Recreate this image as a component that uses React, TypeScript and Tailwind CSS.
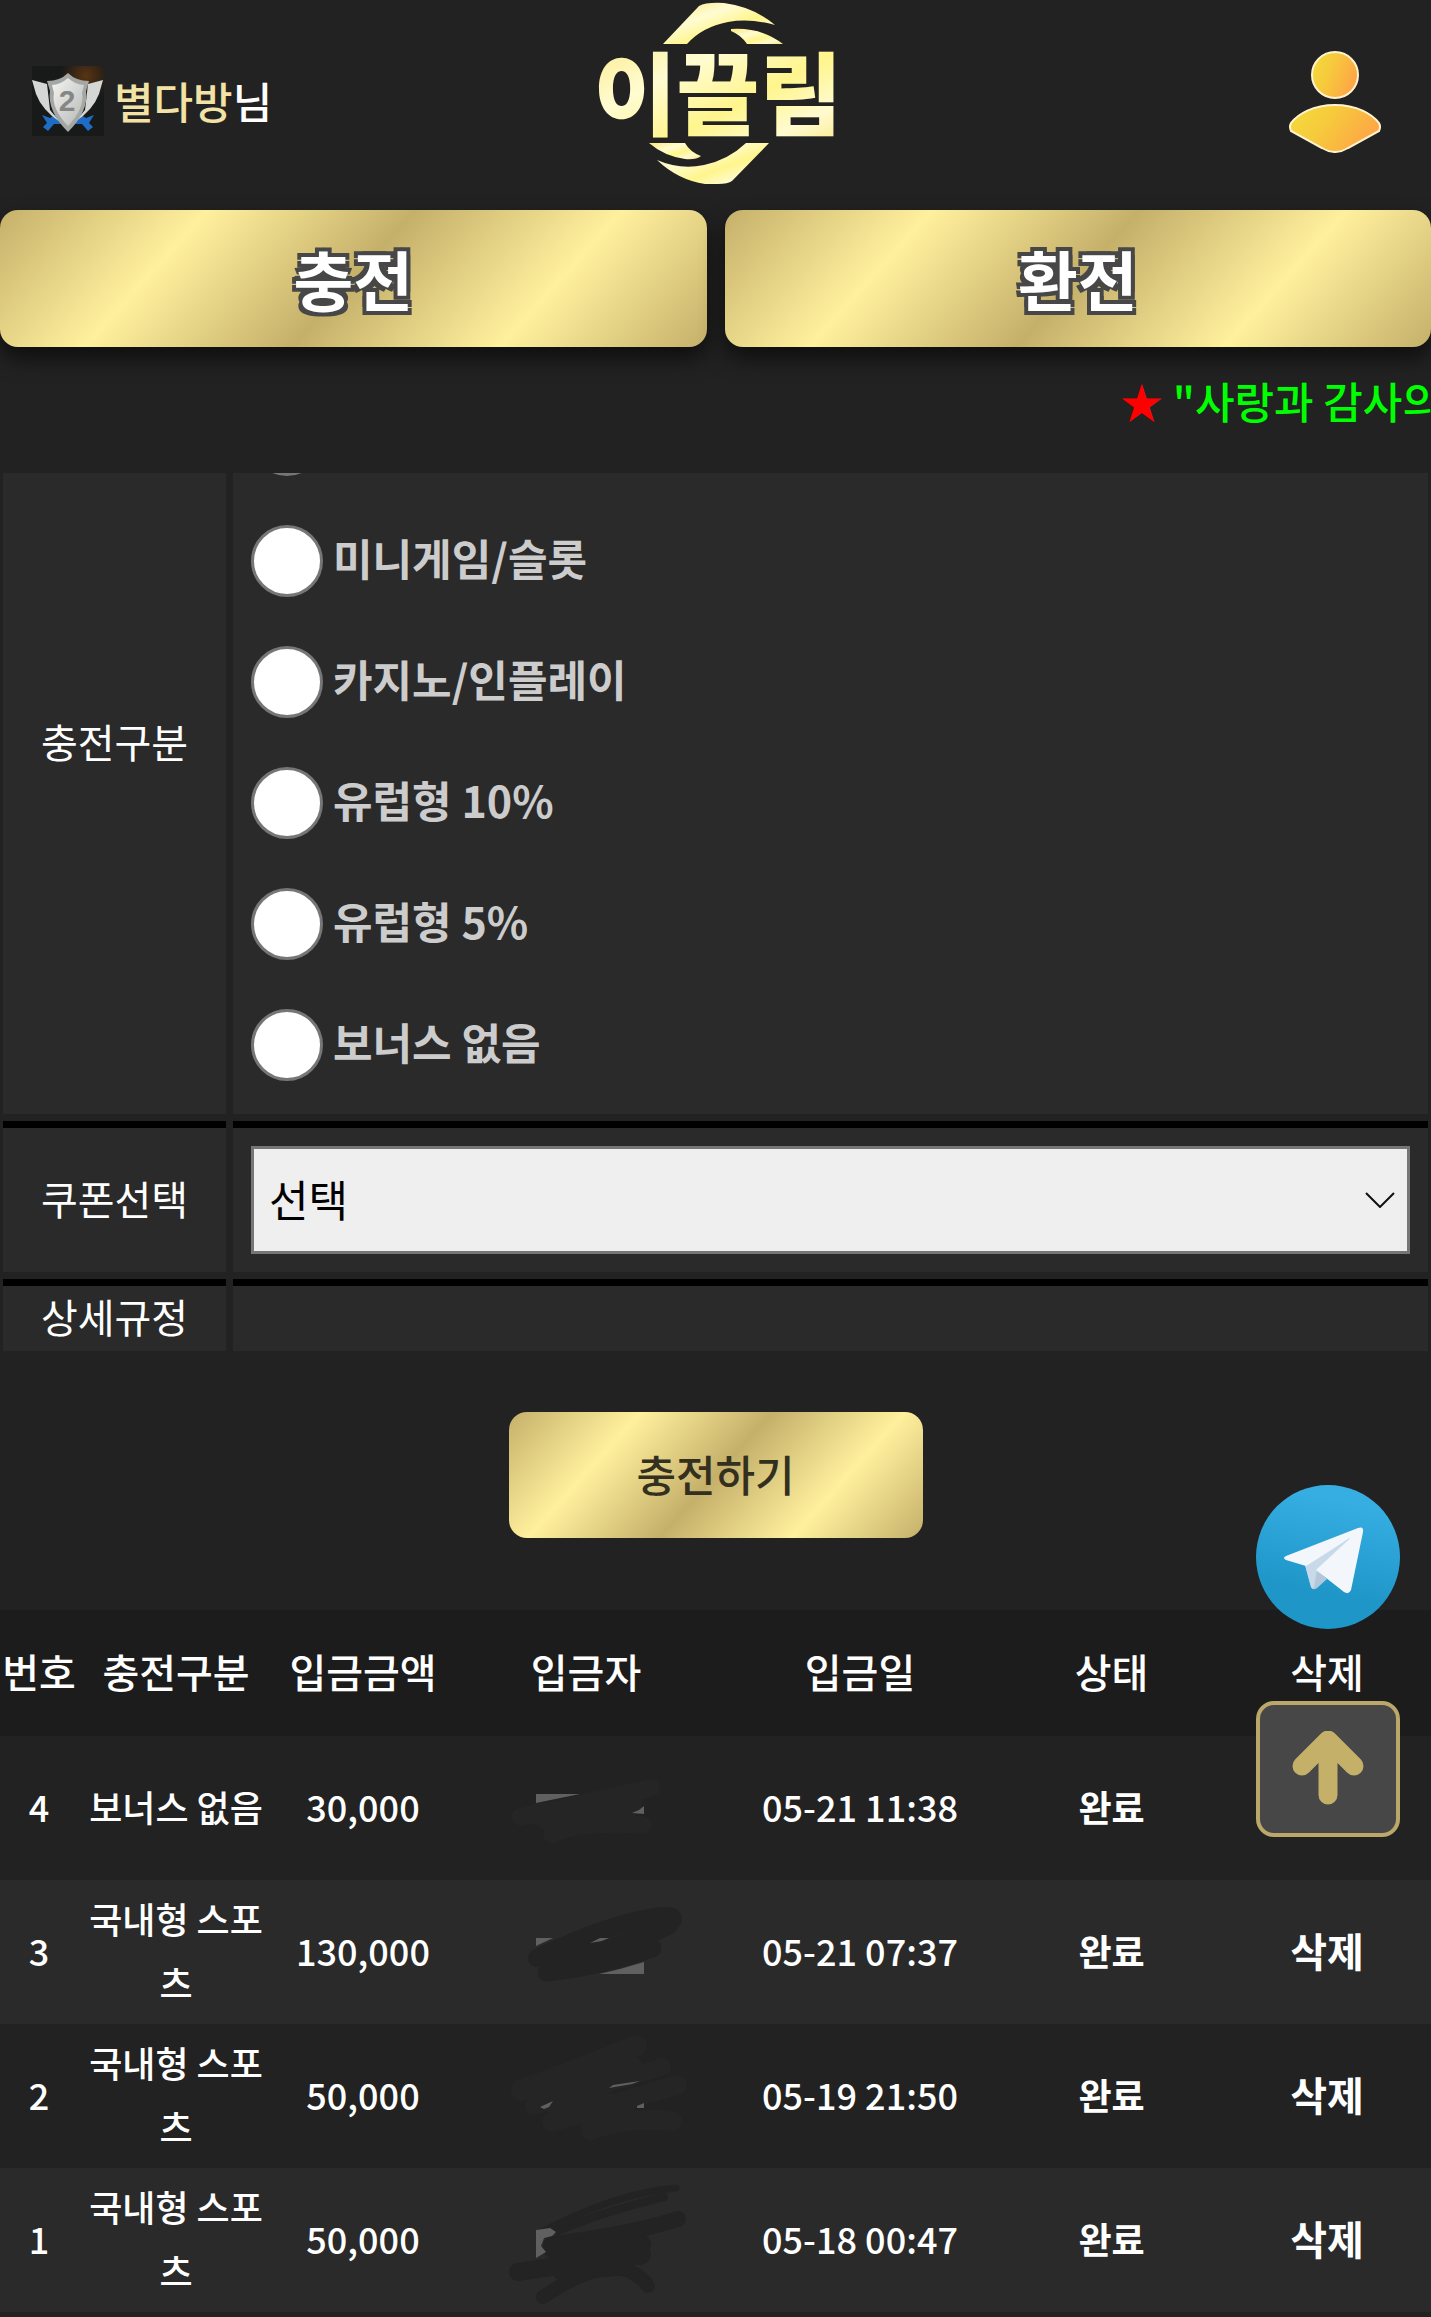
import React, { useState } from 'react'

interface Deposit {
  no: number
  type: string
  amount: string
  date: string
  status: string
}

const deposits: Deposit[] = [
  { no: 4, type: '보너스 없음', amount: '30,000', date: '05-21 11:38', status: '완료' },
  { no: 3, type: '국내형 스포츠', amount: '130,000', date: '05-21 07:37', status: '완료' },
  { no: 2, type: '국내형 스포츠', amount: '50,000', date: '05-19 21:50', status: '완료' },
  { no: 1, type: '국내형 스포츠', amount: '50,000', date: '05-18 00:47', status: '완료' },
]

const bonusTypes = ['미니게임/슬롯', '카지노/인플레이', '유럽형 10%', '유럽형 5%', '보너스 없음']

// brush strokes and what is left of the name box under them, per row
const masks: Record<number, { color: string; strokes: { d: string; w: number }[]; bits: string[] }> = {
  4: {
    color: '#252525',
    strokes: [
      { d: 'M29 81 L159 52', w: 18 },
      { d: 'M45 78 L140 68', w: 22 },
      { d: 'M60 98 Q90 84 151 89', w: 18 },
      { d: 'M52 86 L136 80', w: 14 },
    ],
    bits: ['44,58 88,58 44,67', '140,77 147,74 152,70 152,78'],
  },
  3: {
    color: '#232323',
    strokes: [
      { d: 'M45 78 Q120 42 170 36 Q188 34 176 46 Q150 60 60 84', w: 18 },
      { d: 'M55 92 Q110 86 160 68', w: 19 },
      { d: 'M60 80 L150 64', w: 20 },
    ],
    bits: ['44,58 61,58 44,66', '98,63 108,58 117,58 110,61', '107,94 128,89 152,82 152,94'],
  },
  2: {
    color: '#252525',
    strokes: [
      { d: 'M30 66 Q90 45 144 22', w: 22 },
      { d: 'M42 82 L170 43', w: 18 },
      { d: 'M50 60 L140 44', w: 24 },
      { d: 'M60 98 L185 61', w: 20 },
      { d: 'M98 106 Q140 92 180 97', w: 20 },
      { d: 'M60 76 L130 84', w: 26 },
    ],
    bits: ['48,83 61,77 57,83 52,85', '117,64 121,61 148,57 140,60', '145,82 152,79 152,84 145,84'],
  },
  1: {
    color: '#232323',
    strokes: [
      { d: 'M48 65 Q120 26 184 20', w: 7 },
      { d: 'M66 63 Q110 44 172 29', w: 8 },
      { d: 'M60 76 Q140 66 186 51', w: 16 },
      { d: 'M26 104 Q90 96 150 76', w: 18 },
      { d: 'M62 80 L148 86', w: 22 },
      { d: 'M51 129 Q100 96 130 101 Q146 104 156 118', w: 14 },
      { d: 'M70 104 L134 98', w: 18 },
    ],
    bits: ['44,62 58,60 64,64 60,68 52,70 49,78 54,84 44,90'],
  },
}

const RankBadge = () => (
  <svg className="size-[72px] shrink-0" viewBox="0 0 72 72" aria-hidden="true">
    <defs>
      <radialGradient id="glow" cx="0.75" cy="0.14" r="0.35">
        <stop offset="0" stopColor="#5a3412" />
        <stop offset="1" stopColor="#171a18" />
      </radialGradient>
      <linearGradient id="silver" x1="0" y1="0" x2="1" y2="1">
        <stop offset="0" stopColor="#f4f5f4" />
        <stop offset="1" stopColor="#b5b8b5" />
      </linearGradient>
    </defs>
    <rect width="72" height="70" fill="url(#glow)" />
    <path d="M10 49 L18 52 L26 47 L29 58 L22 58 L16 65 L11 61 L15 57 Z" fill="#1f6cc4" />
    <path d="M62 49 L54 52 L46 47 L43 58 L50 58 L56 65 L61 61 L57 57 Z" fill="#1f6cc4" />
    <path d="M0 14 L15 18 L18 44 L28 56 Q10 44 4 28 Z" fill="#d5d7d6" />
    <path d="M71 14 L56 18 L53 44 L43 56 Q61 44 67 28 Z" fill="#d5d7d6" />
    <path d="M36 7 Q44 15 57 15 L54 25 Q57 45 36 66 Q15 45 18 25 L15 15 Q28 15 36 7 Z" fill="#a4a7a4" />
    <path d="M36 12 Q44 19 52 19 L50 27 Q53 42 36 60 Q19 42 22 27 L20 19 Q28 19 36 12 Z" fill="url(#silver)" />
    <text x="35" y="45" textAnchor="middle" fontSize="30" fontWeight="700" fill="#858785" fontFamily="Liberation Sans, sans-serif">
      2
    </text>
  </svg>
)

const Logo = () => (
  <svg className="h-[184px] w-[248px]" viewBox="32 0 248 184" role="img" aria-label="이끌림">
    <defs>
      <linearGradient id="logoGold" x1="0" y1="0" x2="1" y2="1">
        <stop offset="0" stopColor="#fbe77c" />
        <stop offset="0.35" stopColor="#fffcd2" />
        <stop offset="0.6" stopColor="#fff58c" />
        <stop offset="0.8" stopColor="#fffbd0" />
        <stop offset="1" stopColor="#f9e378" />
      </linearGradient>
    </defs>
    <g fill="url(#logoGold)">
      <path d="M103 44 L139 6 Q146 2 164 3 Q194 7 215 25 Q190 18 168 22 Q142 27 127 44 Z" />
      <path d="M171 29 Q201 27 223 44 L187 44 Q181 35 171 31 Z" />
      <path d="M89 143 L125 143 Q130 152 141 156 Q136 160 125 159 Q104 156 89 143 Z" />
      <path d="M97 160 Q120 170 144 165 Q168 160 186 143 L209 143 L172 181 Q168 184 158 184 L145 184 Q118 180 97 160 Z" />
      <text x="158" y="128" textAnchor="middle" fontSize="90" fontWeight="900" fontFamily="Noto Sans CJK KR, sans-serif">
        이끌림
      </text>
    </g>
  </svg>
)

const ProfileIcon = () => (
  <svg className="h-[102px] w-[92px]" viewBox="0 0 92 102" aria-hidden="true">
    <defs>
      <linearGradient id="person" x1="0" y1="0" x2="1" y2="0.4">
        <stop offset="0" stopColor="#f4dc3c" />
        <stop offset="0.45" stopColor="#f6cb3c" />
        <stop offset="1" stopColor="#fda845" />
      </linearGradient>
    </defs>
    <g fill="url(#person)" stroke="#fff3d0" strokeWidth="2">
      <circle cx="46" cy="24" r="23" />
      <path d="M46 54 C68 54 83 63 90 72 Q92 76 90 80 L59 97 Q46 105 33 97 L2 80 Q0 76 2 72 C9 63 24 54 46 54 Z" />
    </g>
  </svg>
)

const TelegramIcon = () => (
  <svg className="size-36" viewBox="0 0 144 144" aria-hidden="true">
    <defs>
      <linearGradient id="telegram" x1="0.6" y1="0" x2="0.4" y2="1">
        <stop offset="0.1" stopColor="#37aee2" />
        <stop offset="0.75" stopColor="#1e96c8" />
      </linearGradient>
    </defs>
    <circle cx="72" cy="72" r="72" fill="url(#telegram)" />
    <path d="M49 80 L55 102 Q57 106 61 103 L71 94 L60 84 Z" fill="#b3c7db" />
    <path d="M49 80 L55 102 Q57 105 58 102 L61 85 L94 53 Z" fill="#c8daea" />
    <path d="M30 71 L102 43 Q108 41 107 47 L95 105 Q93 110 88 107 L60 85 L94 53 L50 81 L30 75 Q26 73 30 71 Z" fill="#f3f7fc" />
  </svg>
)

const NameMask = ({ no }: { no: number }) => {
  const mask = masks[no]
  return (
    <svg className="mx-auto block h-36 w-[188px] overflow-visible" viewBox="0 0 188 144" aria-hidden="true">
      {mask.strokes.map(s => (
        <path key={s.d} d={s.d} fill="none" stroke={mask.color} strokeWidth={s.w} strokeLinecap="round" />
      ))}
      {mask.bits.map(points => (
        <polygon key={points} points={points} fill="#606060" />
      ))}
    </svg>
  )
}

const gold =
  'bg-[linear-gradient(132deg,#c5b06a_0%,#fff09d_25%,#c5b06a_50%,#fff09d_75%,#c5b06a_100%)]'

const bigButton =
  'h-[137px] rounded-[18px] text-[65px] leading-none font-bold text-white cursor-pointer shadow-[0_11px_22px_rgba(0,0,0,0.6)] [text-shadow:-4px_-4px_#474747,4px_-4px_#474747,-4px_4px_#474747,4px_4px_#474747]'

const labelCell =
  'flex items-center justify-center bg-[#2a2a2a] pb-1 text-[40px] leading-[61px] font-normal text-white'

const headCell = 'p-0 pb-1 font-medium'
const bodyCell = 'p-0 pb-1'

export default function App() {
  const [bonus, setBonus] = useState('')

  return (
    <div className="min-h-screen bg-[#222222] font-['Noto_Sans_CJK_KR',sans-serif] text-white">
      <header className="grid h-[210px] grid-cols-3 pb-[26px]">
        <div className="flex items-center gap-[10px] pl-8 pt-5">
          <RankBadge />
          <p className="pb-1 text-[43px] leading-[64px] font-medium">
            <span className="text-[#f3e2a6]">별다방</span>님
          </p>
        </div>
        <div className="flex justify-center">
          <Logo />
        </div>
        <div className="flex items-center justify-end pr-[50px] pt-5">
          <button type="button" aria-label="내 정보" className="cursor-pointer">
            <ProfileIcon />
          </button>
        </div>
      </header>

      <nav className="grid grid-cols-2 gap-[18px]">
        <button type="button" className={`${gold} ${bigButton}`}>충전</button>
        <button type="button" className={`${gold} ${bigButton}`}>환전</button>
      </nav>

      {/* Notice ticker */}
      <div className="flex h-[126px] items-center justify-end overflow-hidden pb-5">
        <p className="w-[311px] overflow-hidden text-[43px] leading-[64px] font-medium whitespace-nowrap text-[#00ff00]">
          <span className="text-[#ff0000]">★</span> "사랑과 감사의
        </p>
      </div>

      {/* Deposit form, scrolled under the ticker */}
      <form onSubmit={e => e.preventDefault()}>
        <div className="overflow-hidden px-[3px]">
          <div className="-mt-[101px] grid grid-cols-[223px_1fr] gap-[7px]">
            <div className={labelCell}>충전구분</div>
            <div role="radiogroup" aria-label="충전구분" className="bg-[#2a2a2a] px-[18px] pt-[7px] pb-[9px]">
              <div className="flex h-[121px] items-center">
                <input
                  type="radio"
                  name="bonus"
                  aria-label="국내형 스포츠"
                  className="size-[72px] appearance-none rounded-full border-[3px] border-[#767676] bg-white"
                />
              </div>
              {bonusTypes.map(name => (
                <label key={name} className="flex h-[121px] items-center gap-[10px] text-[43px] leading-[64px] font-bold text-[#cccccc]">
                  <input
                    type="radio"
                    name="bonus"
                    checked={bonus === name}
                    onChange={() => setBonus(name)}
                    className="size-[72px] appearance-none rounded-full border-[3px] border-[#767676] bg-white checked:bg-[#767676]"
                  />
                  <span className="pb-2">{name}</span>
                </label>
              ))}
            </div>

            <label htmlFor="coupon" className={`${labelCell} border-t-[7px] border-black`}>
              쿠폰선택
            </label>
            <div className="relative border-t-[7px] border-black bg-[#2a2a2a] p-[18px]">
              <select
                id="coupon"
                className="block h-[108px] w-full appearance-none border-[3px] border-[#767676] bg-[#efefef] px-[15px] pb-1 text-[43px] leading-[64px] text-black"
              >
                <option>선택</option>
              </select>
              <svg
                className="pointer-events-none absolute top-1/2 right-[33px] h-4 w-[30px] -translate-y-1/2"
                viewBox="0 0 30 16"
                fill="none"
                stroke="#111111"
                strokeWidth="2"
                aria-hidden="true"
              >
                <path d="M1 1 L15 15 L29 1" />
              </svg>
            </div>

            <div className={`${labelCell} border-t-[7px] border-black`}>상세규정</div>
            <div className="border-t-[7px] border-black bg-[#2a2a2a]" />
          </div>
        </div>

        <div className="flex justify-center pt-[61px] pb-[72px]">
          <button
            type="submit"
            className={`${gold} h-[126px] w-[414px] cursor-pointer rounded-[18px] pb-1 text-[43px] leading-[64px] font-medium text-[#33301f]`}
          >
            충전하기
          </button>
        </div>
      </form>

      {/* Deposit history */}
      <table className="w-full table-fixed border-collapse text-center text-[36px] leading-[64px] font-medium">
        <colgroup>
          <col className="w-[78px]" />
          <col className="w-[196px]" />
          <col className="w-[178px]" />
          <col className="w-[268px]" />
          <col className="w-[280px]" />
          <col className="w-[223px]" />
          <col />
        </colgroup>
        <thead>
          <tr className="h-[126px] bg-[#1c1c1c] text-[40px] whitespace-nowrap">
            <th className={headCell}>번호</th>
            <th className={headCell}>충전구분</th>
            <th className={headCell}>입금금액</th>
            <th className={headCell}>입금자</th>
            <th className={headCell}>입금일</th>
            <th className={headCell}>상태</th>
            <th className={headCell}>삭제</th>
          </tr>
        </thead>
        <tbody>
          {deposits.map(row => (
            <tr key={row.no} className="h-36 even:bg-[#2a2a2a]">
              <td className={bodyCell}>{row.no}</td>
              <td className={bodyCell}>{row.type}</td>
              <td className={bodyCell}>{row.amount}</td>
              <td className="p-0">
                <NameMask no={row.no} />
              </td>
              <td className={bodyCell}>{row.date}</td>
              <td className={`${bodyCell} font-bold`}>{row.status}</td>
              <td className={bodyCell}>
                {row.no !== 4 && (
                  <button type="button" className="cursor-pointer text-[40px] leading-[64px] font-bold">
                    삭제
                  </button>
                )}
              </td>
            </tr>
          ))}
        </tbody>
      </table>

      {/* Floating shortcuts */}
      <div className="fixed right-[31px] bottom-[480px] flex flex-col gap-[72px]">
        <a href="#telegram" aria-label="텔레그램">
          <TelegramIcon />
        </a>
        <button
          type="button"
          aria-label="맨 위로"
          onClick={() => window.scrollTo(0, 0)}
          className="flex h-[136px] w-36 cursor-pointer items-center justify-center rounded-[18px] border-4 border-[#bba76a] bg-[#474747]"
        >
          <svg className="h-[76px] w-[72px]" viewBox="0 0 72 76" fill="none" stroke="#c5b06a" strokeWidth="19" strokeLinecap="round" strokeLinejoin="round" aria-hidden="true">
            <path d="M10 35 L36 9 L62 35 M36 12 V64" />
          </svg>
        </button>
      </div>
    </div>
  )
}
